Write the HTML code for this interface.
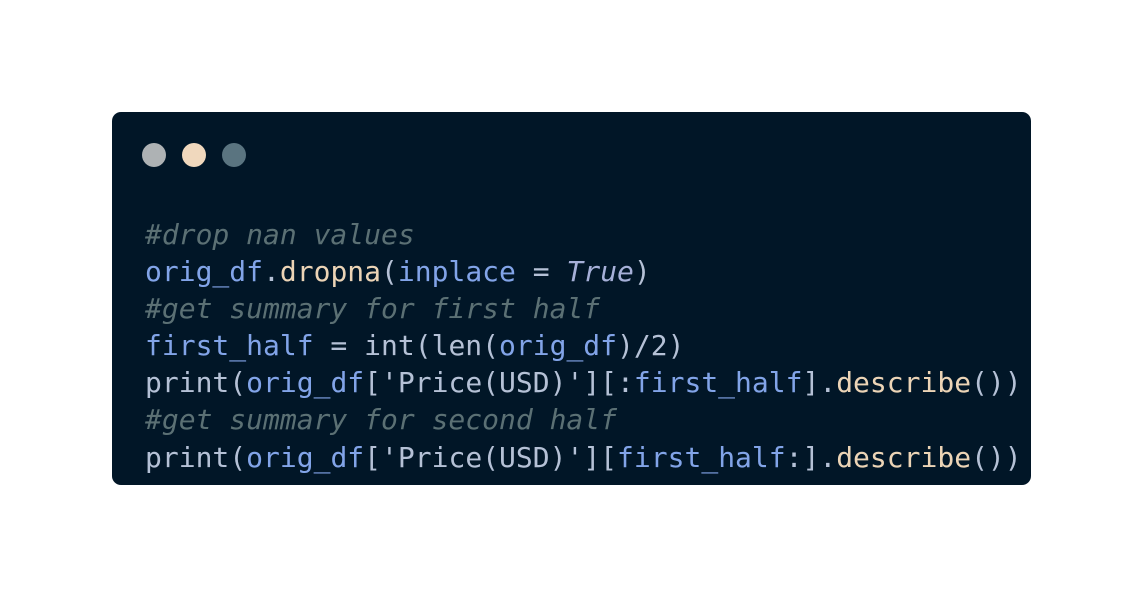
<!DOCTYPE html>
<html><head><style>
html,body{margin:0;padding:0;background:#fff;width:1144px;height:598px;overflow:hidden}
.win{position:absolute;left:112px;top:112px;width:919px;height:373px;background:#011627;border-radius:9px;overflow:hidden}
.dot{position:absolute;top:31px;width:24px;height:24px;border-radius:50%}
pre{position:absolute;left:33px;top:104px;margin:0;font-family:"DejaVu Sans Mono","Liberation Mono",monospace;font-size:28px;line-height:37.1px;color:#b5c1d6;white-space:pre}
.c{color:#5b7074;font-style:italic}
.v{color:#82a4e8}
.f{color:#ecd4b6}
.k{color:#a6b0d8;font-style:italic}
</style></head><body>
<div class="win">
<div class="dot" style="left:30px;background:#aeb2b4"></div>
<div class="dot" style="left:70px;background:#f0d8bd"></div>
<div class="dot" style="left:110px;background:#5a7480"></div>
<pre><span class="c">#drop nan values</span>
<span class="v">orig_df</span>.<span class="f">dropna</span>(<span class="v">inplace</span> = <span class="k">True</span>)
<span class="c">#get summary for first half</span>
<span class="v">first_half</span> = int(len(<span class="v">orig_df</span>)/2)
print(<span class="v">orig_df</span>['Price(USD)'][:<span class="v">first_half</span>].<span class="f">describe</span>())
<span class="c">#get summary for second half</span>
print(<span class="v">orig_df</span>['Price(USD)'][<span class="v">first_half</span>:].<span class="f">describe</span>())</pre>
</div>
</body></html>
